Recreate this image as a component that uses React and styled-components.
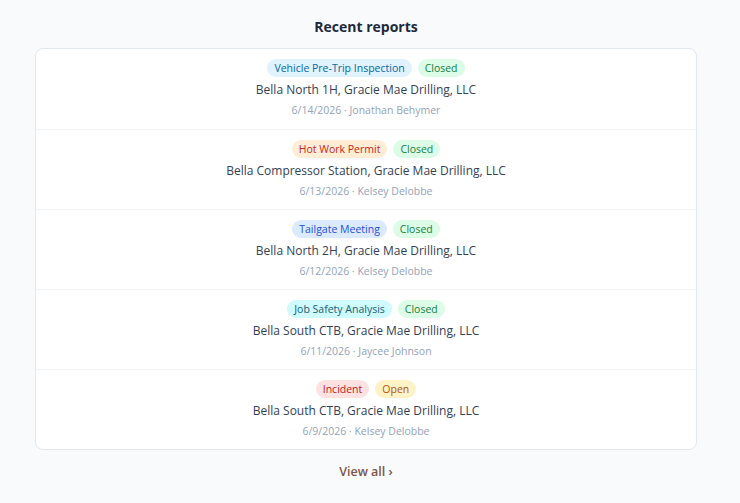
import React from 'react';
import styled, { createGlobalStyle } from 'styled-components';

const GlobalStyle = createGlobalStyle`
  html, body {
    margin: 0;
    background: #f8fafc;
    font-family: "Open Sans", "Noto Sans", sans-serif;
  }
`;

const Page = styled.div`
  padding: 17px 43px 0 35px;
  display: flex;
  flex-direction: column;
  align-items: stretch;
`;

const Title = styled.h2`
  margin: 0 0 11px;
  text-align: center;
  font-size: 14px;
  font-weight: 700;
  line-height: 20px;
  color: #1e293b;
`;

const Card = styled.div`
  background: #fff;
  border: 1px solid #e2e8f0;
  border-radius: 8px;
  overflow: hidden;
`;

const Row = styled.div`
  height: 80px;
  box-sizing: border-box;
  padding-top: 10px;
  display: flex;
  flex-direction: column;
  align-items: center;
  border-top: ${p => (p.first ? 'none' : '1px solid #f1f5f9')};
`;

const Badges = styled.div`
  display: flex;
  gap: 6px;
`;

const tones = {
  sky: ['#e0f2fe', '#0369a1'],
  green: ['#dcfce7', '#15803d'],
  orange: ['#ffedd5', '#c81e1e'],
  blue: ['#dbeafe', '#1d4ed8'],
  cyan: ['#cffafe', '#155e75'],
  red: ['#fee2e2', '#b91c1c'],
  amber: ['#fef3c7', '#b45309'],
};

const Badge = styled.span`
  display: inline-flex;
  align-items: center;
  height: 18px;
  padding: 0 7px;
  border-radius: 9999px;
  font-size: 10.5px;
  font-weight: 500;
  background: ${p => tones[p.tone][0]};
  color: ${p => tones[p.tone][1]};
`;

const Location = styled.div`
  margin-top: 4px;
  font-size: 12px;
  line-height: 18px;
  color: #334155;
`;

const Meta = styled.div`
  margin-top: 3px;
  font-size: 10.5px;
  line-height: 16px;
  color: #94a3b8;
`;

const ViewAll = styled.a`
  align-self: center;
  margin-top: 13px;
  font-size: 12.5px;
  font-weight: 600;
  color: #7c5547;
  text-decoration: none;
  cursor: pointer;
`;

const reports = [
  { type: 'Vehicle Pre-Trip Inspection', tone: 'sky', status: 'Closed', loc: 'Bella North 1H, Gracie Mae Drilling, LLC', date: '6/14/2026', by: 'Jonathan Behymer' },
  { type: 'Hot Work Permit', tone: 'orange', status: 'Closed', loc: 'Bella Compressor Station, Gracie Mae Drilling, LLC', date: '6/13/2026', by: 'Kelsey Delobbe' },
  { type: 'Tailgate Meeting', tone: 'blue', status: 'Closed', loc: 'Bella North 2H, Gracie Mae Drilling, LLC', date: '6/12/2026', by: 'Kelsey Delobbe' },
  { type: 'Job Safety Analysis', tone: 'cyan', status: 'Closed', loc: 'Bella South CTB, Gracie Mae Drilling, LLC', date: '6/11/2026', by: 'Jaycee Johnson' },
  { type: 'Incident', tone: 'red', status: 'Open', loc: 'Bella South CTB, Gracie Mae Drilling, LLC', date: '6/9/2026', by: 'Kelsey Delobbe' },
];

export default function App() {
  return (
    <>
      <GlobalStyle />
      <Page>
        <Title>Recent reports</Title>
        <Card>
          {reports.map((r, i) => (
            <Row key={i} first={i === 0}>
              <Badges>
                <Badge tone={r.tone}>{r.type}</Badge>
                <Badge tone={r.status === 'Open' ? 'amber' : 'green'}>{r.status}</Badge>
              </Badges>
              <Location>{r.loc}</Location>
              <Meta>{r.date} · {r.by}</Meta>
            </Row>
          ))}
        </Card>
        <ViewAll>View all ›</ViewAll>
      </Page>
    </>
  );
}
